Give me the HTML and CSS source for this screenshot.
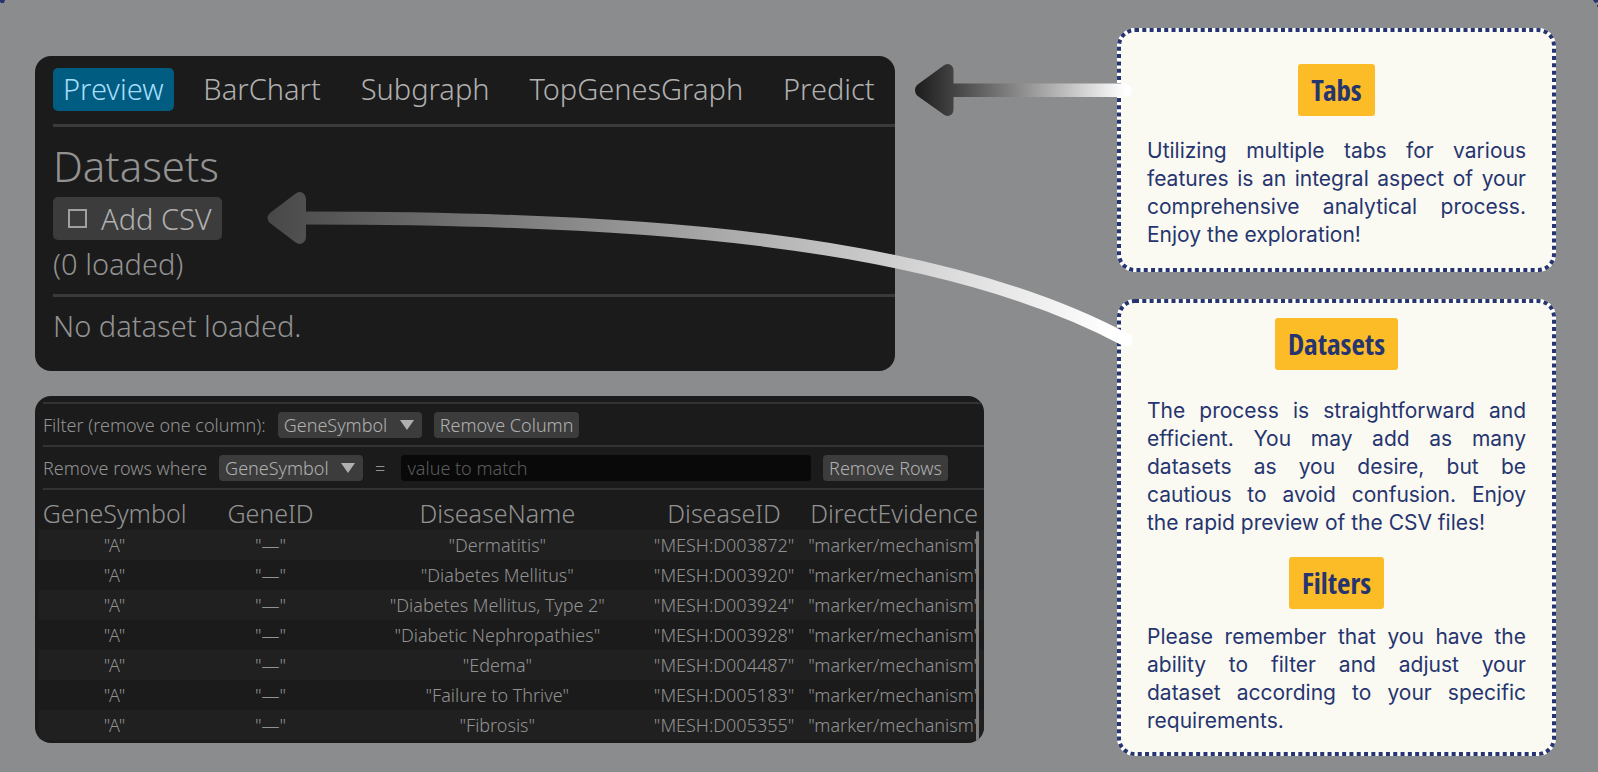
FILE: index.html
```html
<!DOCTYPE html>
<html lang="en">
<head>
<meta charset="utf-8">
<title>Tabs, datasets and filters</title>
<link rel="stylesheet" href="styles.css">
</head>
<body>
<main class="page">
  <div class="demos">
    <section class="panel preview">
      <nav class="tabs">
        <button class="tab active">Preview</button>
        <button class="tab">BarChart</button>
        <button class="tab">Subgraph</button>
        <button class="tab">TopGenesGraph</button>
        <button class="tab">Predict</button>
      </nav>
      <div class="datasets">
        <h2 class="datasets-title">Datasets</h2>
        <button class="add"><span class="box"></span>Add CSV</button>
        <p class="count">(0 loaded)</p>
      </div>
      <p class="empty">No dataset loaded.</p>
    </section>

    <section class="panel filters">
      <div class="bar">
        <label for="column">Filter (remove one column):</label>
        <span class="pick">
          <select id="column"><option>GeneSymbol</option></select>
          <svg class="caret" viewBox="0 0 14 10"><path d="M0 0H14L7 10Z"/></svg>
        </span>
        <button class="action">Remove Column</button>
      </div>
      <div class="bar">
        <label for="rows">Remove rows where</label>
        <span class="pick">
          <select id="rows"><option>GeneSymbol</option></select>
          <svg class="caret" viewBox="0 0 14 10"><path d="M0 0H14L7 10Z"/></svg>
        </span>
        <span class="equals">=</span>
        <input class="value" type="text" placeholder="value to match" aria-label="value to match">
        <button class="action">Remove Rows</button>
      </div>
      <div class="grid">
        <table>
          <colgroup><col class="c1"><col class="c2"><col class="c3"><col class="c4"><col class="c5"></colgroup>
          <thead>
            <tr><th>GeneSymbol</th><th>GeneID</th><th>DiseaseName</th><th>DiseaseID</th><th>DirectEvidence</th></tr>
          </thead>
          <tbody>
            <tr><td>"A"</td><td>"—"</td><td>"Dermatitis"</td><td>"MESH:D003872"</td><td>"marker/mechanism"</td></tr>
            <tr><td>"A"</td><td>"—"</td><td>"Diabetes Mellitus"</td><td>"MESH:D003920"</td><td>"marker/mechanism"</td></tr>
            <tr><td>"A"</td><td>"—"</td><td>"Diabetes Mellitus, Type 2"</td><td>"MESH:D003924"</td><td>"marker/mechanism"</td></tr>
            <tr><td>"A"</td><td>"—"</td><td>"Diabetic Nephropathies"</td><td>"MESH:D003928"</td><td>"marker/mechanism"</td></tr>
            <tr><td>"A"</td><td>"—"</td><td>"Edema"</td><td>"MESH:D004487"</td><td>"marker/mechanism"</td></tr>
            <tr><td>"A"</td><td>"—"</td><td>"Failure to Thrive"</td><td>"MESH:D005183"</td><td>"marker/mechanism"</td></tr>
            <tr><td>"A"</td><td>"—"</td><td>"Fibrosis"</td><td>"MESH:D005355"</td><td>"marker/mechanism"</td></tr>
          </tbody>
        </table>
        <span class="thumb"></span>
      </div>
    </section>
  </div>

  <div class="notes">
    <article class="card first">
      <svg class="dots"><rect width="100%" height="100%" rx="16"/></svg>
      <h2 class="tag">Tabs</h2>
      <p class="text">Utilizing multiple tabs for various features is an integral aspect of your comprehensive analytical process. Enjoy the exploration!</p>
    </article>
    <article class="card second">
      <svg class="dots"><rect width="100%" height="100%" rx="16"/></svg>
      <h2 class="tag">Datasets</h2>
      <p class="text">The process is straightforward and efficient. You may add as many datasets as you desire, but be cautious to avoid confusion. Enjoy the&nbsp;rapid preview of the CSV files!</p>
      <h2 class="tag lower">Filters</h2>
      <p class="text close">Please remember that you have the ability to filter and adjust your dataset&nbsp;according to your specific requirements.</p>
    </article>
  </div>

  <svg class="arrows" viewBox="0 0 1598 772">
    <defs>
      <linearGradient id="short" gradientUnits="userSpaceOnUse" x1="915" y1="0" x2="1125" y2="0">
        <stop offset="0" stop-color="#1c1c1c"/><stop offset=".18" stop-color="#424242"/><stop offset="1" stop-color="#fff"/>
      </linearGradient>
      <linearGradient id="long" gradientUnits="userSpaceOnUse" x1="267" y1="218" x2="1110" y2="335">
        <stop offset="0" stop-color="#484848"/><stop offset="1" stop-color="#fff"/>
      </linearGradient>
    </defs>
    <g fill="url(#short)">
      <path d="M917 85L943 66Q948 62 952 66Q953.500 67.500 953.500 71V83.500H1125A6.700 6.700 0 0 1 1125 97H953.500V109Q953.500 112.500 952 114Q948 118 943 114L917 95.500Q913 90 917 85Z"/>
    </g>
    <path fill="url(#long)" d="M270 213L295 194Q300 190 304 194Q306 196 306 199V237Q306 240 304 242Q300 246 295 242L270 223Q265 218 270 213Z"/>
    <path class="curve" stroke="url(#long)" d="M305 218C620 218 930 235 1126 340"/>
    <g fill="#26356f"><path d="M0 0H5L4 3H1L0 2Z"/><path d="M1593 0H1598V2L1595 3Z"/><path d="M1597 5H1598V7H1597Z"/></g>
  </svg>
</main>
</body>
</html>
```
FILE: styles.css
```css
* { box-sizing: border-box; }

body {
  margin: 0;
  background: #8b8c8d;
  font-family: "Noto Sans", sans-serif;
  font-weight: 300;
}

h2, p { margin: 0; }
h2 { font-weight: inherit; }

button, select, input {
  border: 0;
  margin: 0;
  font: inherit;
  color: inherit;
}

.page {
  position: relative;
  display: grid;
  grid-template-columns: 949fr 439fr;
  gap: 133px;
  align-items: start;
  padding: 28px 42px 15px 35px;
}

.demos { padding-top: 28px; }

.panel {
  background: #1b1b1b;
  border-radius: 16px;
  overflow: hidden;
  color: #929292;
}

/* Enlarged preview panel */
.preview {
  width: 90.6%;
  padding: 12px 0 16px 18px;
  font-size: 29px;
  line-height: 36px;
}

.tabs {
  display: flex;
  justify-content: space-between;
  padding: 0 10px 13px 0;
  border-bottom: 3px solid #3a3a3a;
}

.tab {
  height: 43px;
  padding: 0 10px 2px;
  border-radius: 5px;
  background: none;
  color: #b0b0b0;
}

.tab.active {
  background: #005c80;
  color: #a5dcfa;
}

.datasets {
  display: flex;
  flex-direction: column;
  align-items: flex-start;
  padding: 14px 0 12px;
  border-bottom: 3px solid #3a3a3a;
}

.datasets-title {
  padding-bottom: 6px;
  font-size: 42px;
  line-height: 50px;
}

.add {
  display: flex;
  align-items: center;
  gap: 14px;
  height: 43px;
  padding: 0 10px 0 15px;
  border-radius: 5px;
  background: #3c3c3c;
  color: #b0b0b0;
}

.box {
  width: 19px;
  height: 19px;
  border: 2px solid #a0a0a0;
}

.count { padding-top: 6px; }
.empty { padding: 11px 0; }

/* Filter panel */
.filters {
  margin-top: 25px;
  padding: 6px 0 3px 4px;
  font-size: 18px;
  line-height: 26px;
}

.bar {
  display: flex;
  align-items: center;
  gap: 12px;
  height: 43px;
  margin-left: 4px;
  padding-right: 36px;
  border-top: 2px solid #333;
}

.pick {
  position: relative;
  display: flex;
}

.pick select {
  appearance: none;
  width: 144px;
  height: 26px;
  padding: 0 6px;
  border-radius: 4px;
  background: #3c3c3c;
  color: #b0b0b0;
}

.caret {
  position: absolute;
  right: 8px;
  top: 8px;
  width: 14px;
  fill: #b0b0b0;
  pointer-events: none;
}

.action {
  height: 26px;
  padding: 0 6px;
  border-radius: 4px;
  background: #3c3c3c;
  color: #b0b0b0;
  white-space: nowrap;
}

.equals { padding: 0 4px 0 0; }

.value {
  flex: 1;
  min-width: 0;
  height: 26px;
  padding: 0 6px;
  border-radius: 4px;
  background: #090909;
}

.value::placeholder { color: #5c5c5c; opacity: 1; }

.grid { position: relative; }

.grid::before {
  content: "";
  display: block;
  margin-left: 4px;
  border-top: 2px solid #333;
}

table {
  width: 100%;
  table-layout: fixed;
  border-collapse: collapse;
  text-align: center;
  white-space: nowrap;
}

.c1 { width: 16%; }
.c2 { width: 17%; }
.c3 { width: 31%; }
.c4 { width: 17%; }
.c5 { width: 19%; }

th {
  height: 40px;
  padding: 6px 0 0;
  font-size: 25px;
  font-weight: inherit;
}

td {
  height: 30px;
  padding: 0;
}

tbody tr:nth-child(odd) { background: #202020; }

.thumb {
  position: absolute;
  top: 43px;
  right: 5px;
  bottom: -3px;
  width: 3px;
  border-radius: 2px 2px 0 0;
  background: #7c7c7c;
}

/* Note cards */
.notes {
  display: grid;
  gap: 27px;
}

.card {
  position: relative;
  display: flex;
  flex-direction: column;
  align-items: center;
  border-radius: 18px;
  border: 4px solid #fff;
  background: #fbfaf2;
  color: #26356f;
}

.first { padding: 32px 26px 19px; }
.second { padding: 15px 26px 17px; }

.dots {
  position: absolute;
  inset: -2px;
  width: calc(100% + 4px);
  height: calc(100% + 4px);
  overflow: visible;
}

.dots rect {
  fill: none;
  stroke: #26356f;
  stroke-width: 4;
  stroke-dasharray: 4 3.3;
}

.tag {
  padding: 0 13px;
  border-radius: 3px;
  background: #fcbc27;
  font: bold 29px/52px "Liberation Sans Narrow", "Open Sans Condensed", "DejaVu Sans Condensed", sans-serif;
}

.text {
  align-self: stretch;
  padding-top: 21px;
  font: 400 21px/28px "Inter", sans-serif;
  text-align: justify;
}

.second .text { padding-top: 27px; }
.second .close { padding-top: 14px; }
.lower { margin-top: 20px; }

.arrows {
  position: absolute;
  top: 0;
  left: 0;
  width: 100%;
  pointer-events: none;
}

.curve {
  fill: none;
  stroke-width: 13;
  stroke-linecap: round;
}
```
